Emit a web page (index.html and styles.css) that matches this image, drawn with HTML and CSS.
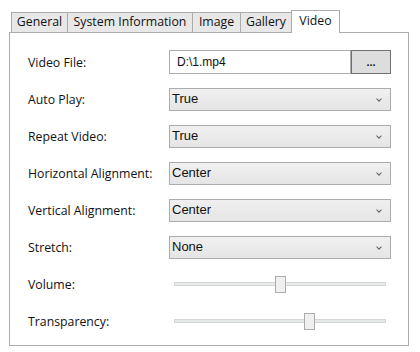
FILE: index.html
```html
<!DOCTYPE html>
<html lang="en">
<head>
    <meta charset="UTF-8">
    <title>Video Settings</title>
    <link rel="stylesheet" href="styles.css">
</head>
<body>
    <div class="tabs">
        <div class="tab tab-general">General</div>
        <div class="tab tab-system">System Information</div>
        <div class="tab tab-image">Image</div>
        <div class="tab tab-gallery">Gallery</div>
        <div class="tab tab-video active">Video</div>
    </div>
    <div class="panel">
        <div class="row">
            <label>Video File:</label>
            <div class="file-box">
                <div class="textbox">D:\1.mp4</div>
                <div class="browse">...</div>
            </div>
        </div>
        <div class="row">
            <label>Auto Play:</label>
            <div class="combo">True<span class="chevron"></span></div>
        </div>
        <div class="row">
            <label>Repeat Video:</label>
            <div class="combo">True<span class="chevron"></span></div>
        </div>
        <div class="row">
            <label>Horizontal Alignment:</label>
            <div class="combo">Center<span class="chevron"></span></div>
        </div>
        <div class="row">
            <label>Vertical Alignment:</label>
            <div class="combo">Center<span class="chevron"></span></div>
        </div>
        <div class="row">
            <label>Stretch:</label>
            <div class="combo">None<span class="chevron"></span></div>
        </div>
        <div class="row">
            <label>Volume:</label>
            <div class="slider">
                <div class="track"></div>
                <div class="thumb" style="left: 101px"></div>
            </div>
        </div>
        <div class="row">
            <label>Transparency:</label>
            <div class="slider">
                <div class="track"></div>
                <div class="thumb" style="left: 130px"></div>
            </div>
        </div>
    </div>
</body>
</html>
```

FILE: styles.css
```css
body {
    margin: 0;
    background: #fff;
    font-family: "Open Sans", "Noto Sans", sans-serif;
    font-size: 12.3px;
    color: #111;
}
.tabs {
    display: flex;
    align-items: flex-end;
    height: 33px;
    padding-left: 11px;
    position: relative;
    z-index: 1;
}
.tab {
    box-sizing: border-box;
    height: 20px;
    border: 1px solid #acacac;
    border-bottom: none;
    background: #e8e8e8;
    text-align: center;
    line-height: 18px;
    font-size: 12.3px;
    margin-bottom: 1px;
}
.tab + .tab {
    margin-left: -1px;
}
.tab-general { width: 57px; }
.tab-system { width: 126px; }
.tab-image { width: 49px; }
.tab-gallery { width: 52px; }
.tab-video { width: 49px; }
.tab.active {
    background: #fff;
    height: 23px;
    margin-bottom: 0;
    line-height: 20px;
}
.panel {
    box-sizing: border-box;
    width: 400px;
    height: 314px;
    margin: -1px 0 0 9px;
    border: 1px solid #acacac;
    padding: 17px 0 0 18px;
    display: flex;
    flex-direction: column;
    gap: 13px;
}
.row {
    display: flex;
    align-items: center;
    height: 24px;
}
.row label {
    width: 141px;
}
.file-box {
    display: flex;
    height: 24px;
}
.textbox {
    box-sizing: border-box;
    width: 182px;
    border: 1px solid #acacac;
    padding-left: 7px;
    line-height: 22px;
    font-family: "Liberation Sans", Arial, sans-serif;
    font-size: 12px;
}
.browse {
    box-sizing: border-box;
    width: 40px;
    background: #dddddd;
    border: 1px solid #707070;
    text-align: center;
    line-height: 22px;
    font-family: "Liberation Sans", Arial, sans-serif;
    font-size: 11px;
    font-weight: bold;
}
.combo {
    box-sizing: border-box;
    position: relative;
    width: 222px;
    height: 23px;
    border: 1px solid #acacac;
    background: linear-gradient(#f0f0f0, #e5e5e5);
    padding-left: 2px;
    line-height: 20px;
    font-family: "Liberation Sans", Arial, sans-serif;
    font-size: 13px;
}
.chevron {
    position: absolute;
    right: 9px;
    top: 8px;
    width: 3px;
    height: 3px;
    border-right: 1px solid #606060;
    border-bottom: 1px solid #606060;
    transform: rotate(45deg);
}
.slider {
    position: relative;
    width: 222px;
    height: 24px;
}
.track {
    position: absolute;
    left: 5px;
    right: 5px;
    top: 10px;
    height: 4px;
    box-sizing: border-box;
    background: #e7eaea;
    border: 1px solid #d6d6d6;
}
.thumb {
    position: absolute;
    top: 4px;
    margin-left: 5px;
    width: 11px;
    height: 17px;
    box-sizing: border-box;
    background: #f0f0f0;
    border: 1px solid #acacac;
}
```
